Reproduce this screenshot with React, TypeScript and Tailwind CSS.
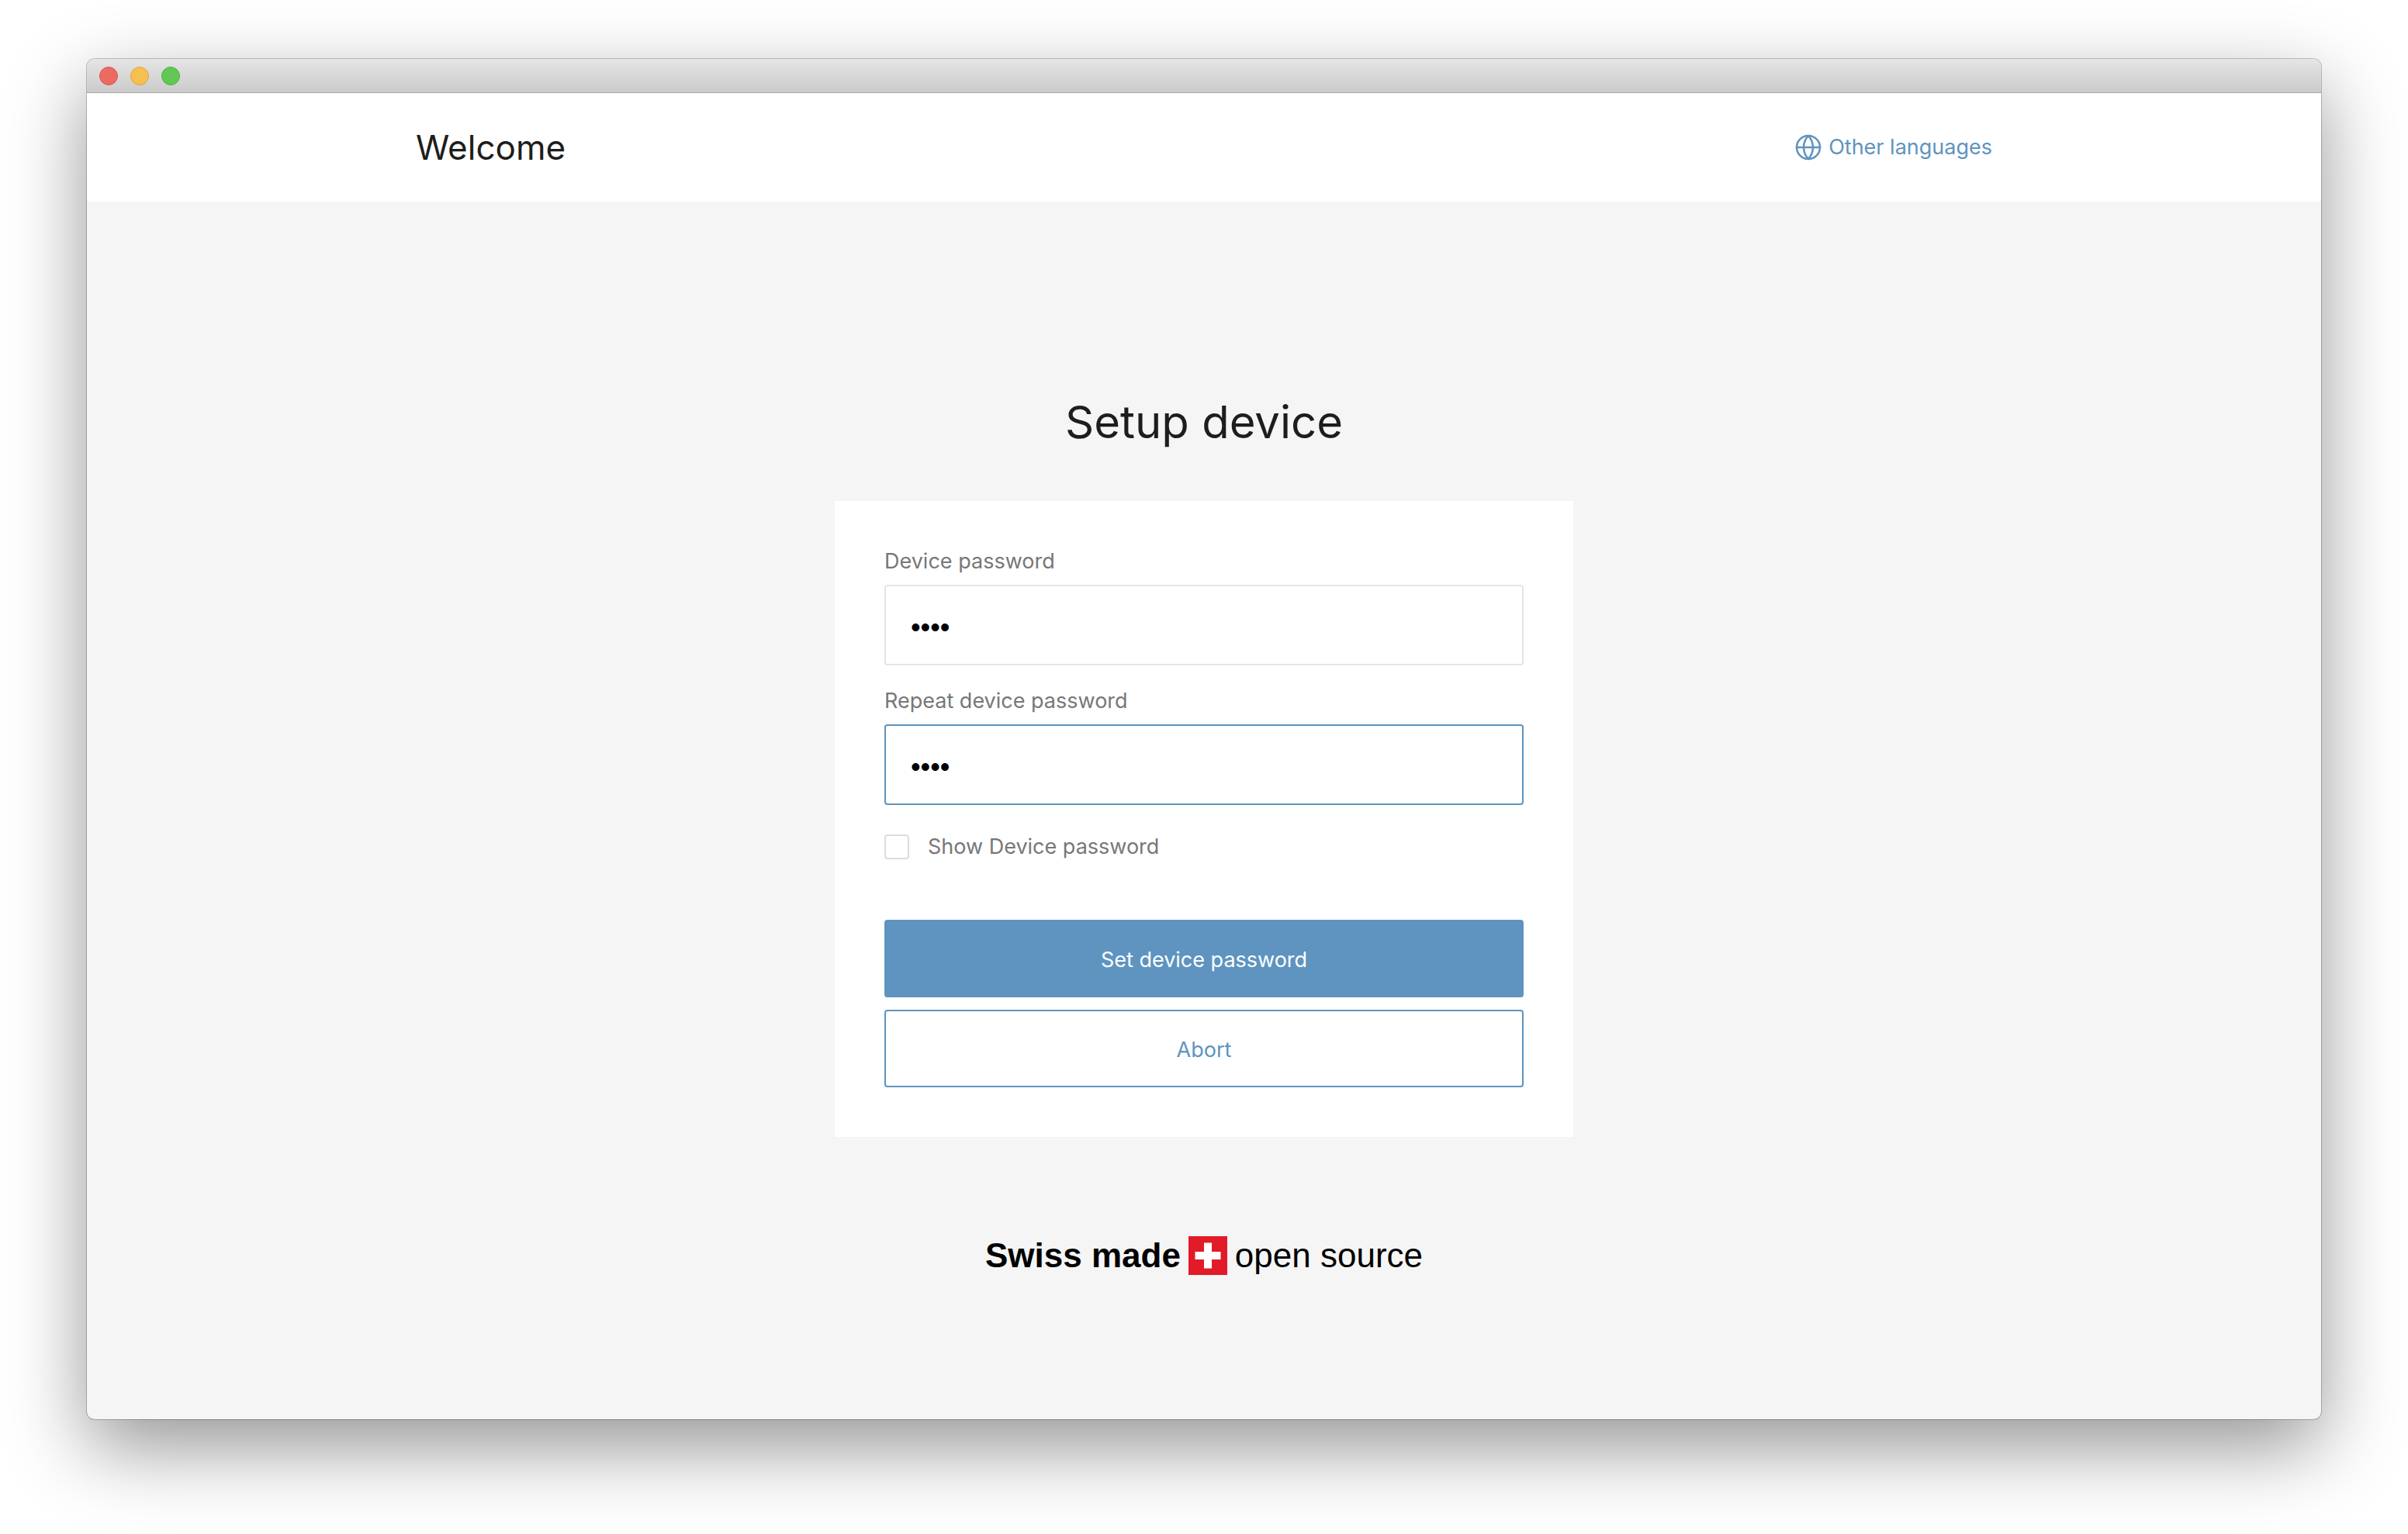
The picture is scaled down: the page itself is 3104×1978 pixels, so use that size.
import { useState } from "react";

function GlobeIcon() {
  return (
    <svg
      className="size-9"
      viewBox="0 0 24 24"
      fill="none"
      stroke="currentColor"
      strokeWidth="1.7"
      strokeLinecap="round"
      strokeLinejoin="round"
      aria-hidden="true"
    >
      <circle cx="12" cy="12" r="10" />
      <path d="M2 12h20" />
      <path d="M12 2a15.3 15.3 0 0 1 4 10 15.3 15.3 0 0 1-4 10 15.3 15.3 0 0 1-4-10 15.3 15.3 0 0 1 4-10z" />
    </svg>
  );
}

function TitleBar() {
  return (
    <div className="flex h-11 items-center gap-4 border-b border-[#a9a9a9] bg-gradient-to-b from-[#e5e5e5] to-[#cbcbcb] px-4">
      <button type="button" aria-label="Close" className="size-6 rounded-full border border-[#d9584e] bg-[#ec6b60]" />
      <button type="button" aria-label="Minimize" className="size-6 rounded-full border border-[#dea43e] bg-[#f5c04f]" />
      <button type="button" aria-label="Zoom" className="size-6 rounded-full border border-[#4fb03f] bg-[#62c755]" />
    </div>
  );
}

type PasswordFieldProps = {
  id: string;
  label: string;
  value: string;
  visible: boolean;
  active?: boolean;
  onChange: (value: string) => void;
};

function PasswordField({ id, label, value, visible, active, onChange }: PasswordFieldProps) {
  return (
    <div className="flex flex-col gap-4">
      <label htmlFor={id} className="text-[27px] leading-7 text-[#777777]">
        {label}
      </label>
      <input
        id={id}
        type={visible ? "text" : "password"}
        value={value}
        onChange={(event) => onChange(event.target.value)}
        className={
          "h-[104px] w-full rounded-sm border-2 bg-white px-8 pt-1.5 font-['Liberation_Sans',sans-serif] text-4xl text-black outline-none focus:border-[#5e94bf] " +
          (active ? "border-[#5e94bf]" : "border-[#e5e5e5]")
        }
      />
    </div>
  );
}

function SwissMade() {
  return (
    <div className="flex items-center gap-2.5 font-['Liberation_Sans',sans-serif] text-[44px] leading-[50px] text-black">
      <span className="font-bold">Swiss made</span>
      <svg className="size-[50px]" viewBox="0 0 50 50" aria-hidden="true">
        <rect width="50" height="50" fill="#e11b28" />
        <path d="M20 8.500h10v11.500h11.500v10H30v11.500H20V30H8.500V20H20z" fill="#fff" />
      </svg>
      <span>open source</span>
    </div>
  );
}

export default function App() {
  const [password, setPassword] = useState("1234");
  const [repeat, setRepeat] = useState("1234");
  const [visible, setVisible] = useState(false);

  return (
    <div className="min-h-screen bg-white px-28 pt-[76px] pb-[148px] font-['Inter',sans-serif] text-[#1d1d1b]">
      <div className="overflow-hidden rounded-[10px] bg-[#f5f5f5] shadow-[0_0_0_1px_rgba(0,0,0,0.22),0_36px_100px_rgba(0,0,0,0.42)]">
        <TitleBar />
        <header className="bg-white">
          <div className="mx-auto flex h-[140px] max-w-[2032px] items-center justify-between">
            <h1 className="text-[44px] leading-none">Welcome</h1>
            <a href="#languages" className="flex items-center gap-2 text-[27px] leading-7 text-[#5e94bf]">
              <GlobeIcon />
              Other languages
            </a>
          </div>
        </header>
        <main className="flex flex-col items-center pt-[252px] pb-[186px]">
          <h2 className="mb-[70px] text-[58px] leading-[64px]">Setup device</h2>
          <form
            className="mb-32 w-full max-w-[952px] bg-white p-16"
            onSubmit={(event) => event.preventDefault()}
          >
            <div className="flex flex-col gap-8">
              <PasswordField
                id="password"
                label="Device password"
                value={password}
                visible={visible}
                onChange={setPassword}
              />
              <PasswordField
                id="repeat"
                label="Repeat device password"
                value={repeat}
                visible={visible}
                active
                onChange={setRepeat}
              />
            </div>
            <div className="mt-[38px] mb-[78px] flex items-center gap-6">
              <input
                id="show"
                type="checkbox"
                checked={visible}
                onChange={(event) => setVisible(event.target.checked)}
                className="size-8 appearance-none rounded-sm border-2 border-[#dcdcdc] bg-white checked:border-[#5e94bf] checked:bg-[#5e94bf]"
              />
              <label htmlFor="show" className="text-[27px] leading-8 text-[#777777]">
                Show Device password
              </label>
            </div>
            <div className="flex flex-col gap-4">
              <button
                type="submit"
                className="h-[100px] rounded-sm border-2 border-[#5e94bf] bg-[#5e94bf] pt-1 text-[27px] leading-7 text-white"
              >
                Set device password
              </button>
              <button
                type="button"
                className="h-[100px] rounded-sm border-2 border-[#5e94bf] bg-white pt-1 text-[27px] leading-7 text-[#5e94bf]"
              >
                Abort
              </button>
            </div>
          </form>
          <SwissMade />
        </main>
      </div>
    </div>
  );
}
